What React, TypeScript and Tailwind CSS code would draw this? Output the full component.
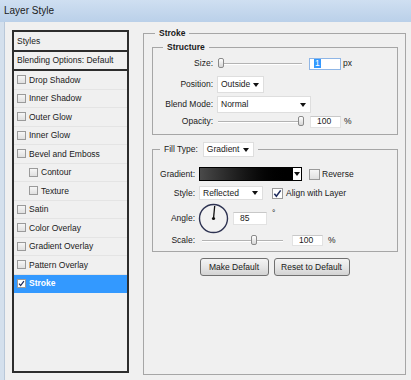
import React from "react";

const Arrow = () => (
  <svg width="6" height="4" viewBox="0 0 6 4" className="shrink-0">
    <polygon points="0,0 6,0 3,4" fill="#111" />
  </svg>
);

const Check = ({ size = 9, checked = false, white = false }: { size?: number; checked?: boolean; white?: boolean }) => (
  <div
    className={`shrink-0 border border-[#9a9a9a] flex items-center justify-center ${white ? "bg-white" : "bg-linear-to-b from-[#f6f6f6] to-[#e0e0e0]"}`}
    style={{ width: size, height: size }}
  >
    {checked && (
      <svg width={size - 2} height={size - 2} viewBox="0 0 8 8">
        <path d="M1.2 4.2 L3 6.4 L6.8 1.2" stroke="#1d2a5c" strokeWidth="1.4" fill="none" />
      </svg>
    )}
  </div>
);

const Slider = ({ width, thumb }: { width: number; thumb: number }) => (
  <div className="relative h-[11px] flex items-center shrink-0" style={{ width }}>
    <div className="w-full h-[2px] border-t border-[#b3b3b3] border-b border-b-white" />
    <div
      className="absolute top-0 w-[6px] h-[10px] rounded-[2px] border border-[#8a8a8a] bg-linear-to-b from-white to-[#d6d6d6]"
      style={{ left: thumb }}
    />
  </div>
);

const Select = ({ text, width, height }: { text: string; width: number; height: number }) => (
  <div
    className="shrink-0 bg-white border border-[#dedede] flex items-center justify-between pl-[3px] pr-[4px]"
    style={{ width, height }}
  >
    <span>{text}</span>
    <Arrow />
  </div>
);

const Input = ({ text, width, height }: { text: string; width: number; height: number }) => (
  <div
    className="shrink-0 bg-white border border-[#e2e2e2] border-t-[#c8c8c8] flex items-center pl-[6px]"
    style={{ width, height }}
  >
    {text}
  </div>
);

const items: { label: string; indent?: boolean; checked?: boolean; selected?: boolean }[] = [
  { label: "Drop Shadow" },
  { label: "Inner Shadow" },
  { label: "Outer Glow" },
  { label: "Inner Glow" },
  { label: "Bevel and Emboss" },
  { label: "Contour", indent: true },
  { label: "Texture", indent: true },
  { label: "Satin" },
  { label: "Color Overlay" },
  { label: "Gradient Overlay" },
  { label: "Pattern Overlay" },
  { label: "Stroke", checked: true, selected: true },
];

export default function App() {
  return (
    <div className="w-[411px] h-[380px] bg-[#f0f0f0] flex flex-col overflow-hidden font-['Liberation_Sans',Arial,sans-serif] text-[8.5px] text-[#1a1a1a] leading-none">
      <div className="h-[22px] shrink-0 bg-linear-to-b from-[#cfdff1] to-[#bad0e9] flex items-center pl-[4px] text-[10px] text-[#1b1b1b]">
        Layer Style
      </div>
      <div className="flex flex-1 min-h-0">
        <div className="w-[5px] bg-[#d4e0ed] border-r border-[#b9c8d9]" />
        {/* Left panel */}
        <div className="ml-[7px] mt-[8px] w-[117px] h-[343px] border-2 border-[#2d2d2d] flex flex-col">
          <div className="h-[20px] border-b-2 border-[#2d2d2d] flex items-center pl-[3px]">Styles</div>
          <div className="h-[19px] border-b-2 border-[#2d2d2d] flex items-center pl-[3px]">Blending Options: Default</div>
          {items.map((it) => (
            <div
              key={it.label}
              className={`h-[18.5px] flex items-center border-b ${
                it.selected ? "bg-[#3399ff] text-white font-bold border-[#3399ff]" : "border-[#e4e4e4]"
              } ${it.indent ? "pl-[15px]" : "pl-[3px]"}`}
            >
              <Check checked={it.checked} white={it.selected} />
              <span className="ml-[3px]">{it.label}</span>
            </div>
          ))}
        </div>
        {/* Right panel */}
        <fieldset className="ml-[14px] mt-[6px] w-[263px] h-[347px] border border-[#a6a6a6] flex flex-col">
          <legend className="ml-[11px] px-[4px] font-bold leading-[10px]">Stroke</legend>

          <fieldset className="ml-[8px] mt-[4px] w-[246px] h-[93px] border border-[#a6a6a6]">
            <legend className="ml-[10px] px-[4px] font-bold leading-[10px]">Structure</legend>
            <div className="flex items-center h-[13px] mt-[5px]">
              <span className="w-[60px] text-right">Size:</span>
              <div className="ml-[5px]">
                <Slider width={84} thumb={0} />
              </div>
              <div className="ml-[7px] w-[32px] h-[12px] bg-white border border-[#8fb6e6] flex items-center pl-[4px] shrink-0">
                <span className="bg-[#3399ff] text-white px-[1px] leading-[9px]">1</span>
              </div>
              <span className="ml-[2px]">px</span>
            </div>
            <div className="flex items-center h-[17px] mt-[6px]">
              <span className="w-[60px] text-right">Position:</span>
              <div className="ml-[4px]">
                <Select text="Outside" width={47} height={17} />
              </div>
            </div>
            <div className="flex items-center h-[17px] mt-[3px]">
              <span className="w-[60px] text-right">Blend Mode:</span>
              <div className="ml-[4px]">
                <Select text="Normal" width={94} height={17} />
              </div>
            </div>
            <div className="flex items-center h-[13px] mt-[2px]">
              <span className="w-[60px] text-right">Opacity:</span>
              <div className="ml-[5px]">
                <Slider width={86} thumb={80} />
              </div>
              <div className="ml-[6px]">
                <Input text="100" width={31} height={12} />
              </div>
              <span className="ml-[3px]">%</span>
            </div>
          </fieldset>

          <fieldset className="ml-[8px] mt-[7px] w-[246px] h-[110px] border border-[#a6a6a6]">
            <legend className="ml-[7px] px-[4px]">
              <div className="flex items-center h-[15px]">
                <span>Fill Type:</span>
                <div className="ml-[5px]">
                  <Select text="Gradient" width={51} height={15} />
                </div>
              </div>
            </legend>
            <div className="flex items-center h-[14px] mt-[10px]">
              <span className="w-[42px] text-right">Gradient:</span>
              <div className="ml-[4px] w-[103px] h-[14px] border border-black flex shrink-0">
                <div className="flex-1 bg-linear-to-r from-[#4a4a4a] via-[#151515] to-black" />
                <div className="w-[9px] bg-white border-l border-black flex items-center justify-center">
                  <Arrow />
                </div>
              </div>
              <div className="ml-[7px]">
                <Check size={11} />
              </div>
              <span className="ml-[2px]">Reverse</span>
            </div>
            <div className="flex items-center h-[14px] mt-[5px]">
              <span className="w-[42px] text-right">Style:</span>
              <div className="ml-[4px]">
                <Select text="Reflected" width={64} height={14} />
              </div>
              <div className="ml-[9px]">
                <Check size={11} checked white />
              </div>
              <span className="ml-[3px]">Align with Layer</span>
            </div>
            <div className="flex items-center h-[30px] mt-[3px]">
              <span className="w-[42px] text-right">Angle:</span>
              <svg width="31" height="31" viewBox="0 0 31 31" className="ml-[3px] shrink-0">
                <circle cx="15.5" cy="15.5" r="14" fill="#f2f2f2" stroke="#2e3352" strokeWidth="1.4" />
                <line x1="15.5" y1="15.5" x2="16.7" y2="3" stroke="#111" strokeWidth="1.3" />
                <circle cx="15.5" cy="15.5" r="1.6" fill="#111" />
              </svg>
              <div className="ml-[4px]">
                <Input text="85" width={34} height={13} />
              </div>
              <span className="ml-[5px] self-start mt-[6px]">°</span>
            </div>
            <div className="flex items-center h-[11px] mt-[2px]">
              <span className="w-[42px] text-right">Scale:</span>
              <div className="ml-[7px]">
                <Slider width={81} thumb={49} />
              </div>
              <div className="ml-[9px]">
                <Input text="100" width={31} height={11} />
              </div>
              <span className="ml-[5px]">%</span>
            </div>
          </fieldset>

          <div className="flex justify-center gap-[5px] mt-[6px]">
            <div className="w-[69px] h-[18px] rounded-[3px] border border-[#707070] bg-linear-to-b from-[#f4f4f4] via-[#e6e6e6] to-[#d3d3d3] flex items-center justify-center">
              Make Default
            </div>
            <div className="w-[76px] h-[18px] rounded-[3px] border border-[#707070] bg-linear-to-b from-[#f4f4f4] via-[#e6e6e6] to-[#d3d3d3] flex items-center justify-center">
              Reset to Default
            </div>
          </div>
        </fieldset>
      </div>
    </div>
  );
}
